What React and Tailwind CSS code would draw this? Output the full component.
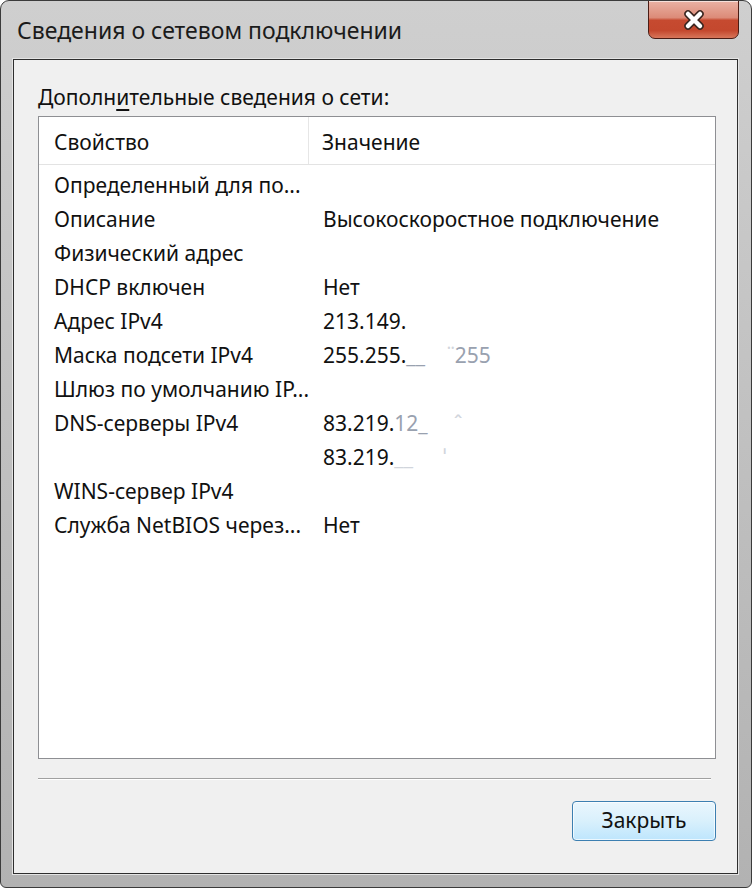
import React from "react";

const rows = [
  ["Определенный для по...", ""],
  ["Описание", "Высокоскоростное подключение"],
  ["Физический адрес", ""],
  ["DHCP включен", "Нет"],
  ["Адрес IPv4", "213.149."],
  ["Маска подсети IPv4", "mask"],
  ["Шлюз по умолчанию IP...", ""],
  ["DNS-серверы IPv4", "dns1"],
  ["", "dns2"],
  ["WINS-сервер IPv4", ""],
  ["Служба NetBIOS через...", "Нет"],
];

const Value = ({ v }) => {
  if (v === "mask")
    return (
      <span>
        255.255.<span className="text-gray-400">__</span>
        <span className="ml-[22px] text-gray-300">˙˙</span>
        <span className="text-gray-400">255</span>
      </span>
    );
  if (v === "dns1")
    return (
      <span>
        83.219.<span className="text-gray-400">12_</span>
        <span className="ml-[26px] text-gray-300">ˆ</span>
      </span>
    );
  if (v === "dns2")
    return (
      <span>
        83.219.<span className="text-gray-300">__</span>
        <span className="ml-[30px] text-gray-300">ˈ</span>
      </span>
    );
  return <span>{v}</span>;
};

const CloseIcon = () => (
  <svg width="26" height="22" viewBox="0 0 26 22">
    <path d="M7 5 L19 17 M19 5 L7 17" stroke="#3a2620" strokeWidth="7.5" strokeLinecap="round" />
    <path d="M7 5 L19 17 M19 5 L7 17" stroke="#ffffff" strokeWidth="4.5" strokeLinecap="round" />
  </svg>
);

export default function App() {
  return (
    <div
      className="w-[752px] h-[888px] flex flex-col border border-[#3b3b3b] rounded-t-[9px] rounded-b-[6px] bg-gradient-to-b from-[#cfcfcf] via-[#c0c0c0] to-[#b2b2b2] pl-[12px] pr-[13px] pb-[13px] overflow-hidden"
      style={{ fontFamily: '"Noto Sans", "Liberation Sans", sans-serif' }}
    >
      {/* title bar */}
      <div className="h-[58px] flex items-start justify-between">
        <div className="pl-[4px] pt-[13px] text-[23px] leading-[32px] text-[#1b1b1b]">
          Сведения о сетевом подключении
        </div>
        <div className="w-[91px] h-[39px] -mr-[1px] mt-[-1px] rounded-b-[7px] border border-[#4a1c14] bg-[linear-gradient(to_bottom,#eab2a4_0%,#dc8b78_45%,#c64a30_52%,#c4482e_80%,#d8765a_100%)] flex items-center justify-center shadow-[inset_0_1px_0_rgba(255,255,255,0.6)]">
          <CloseIcon />
        </div>
      </div>

      {/* content */}
      <div className="flex-1 flex flex-col border border-[#2e2e2e] bg-[#f0f0f0] shadow-[0_0_0_1px_#e4e4e4] pl-[24px] pr-[21px]">
        <div className="mt-[23px] h-[28px] leading-[28px] text-[21px] text-[#111]">
          Дополн<span className="underline underline-offset-4">и</span>тельные сведения о сети:
        </div>

        <div className="mt-[5px] h-[643px] border border-[#8e8f93] bg-white flex flex-col text-[21px] text-[#111]">
          <div className="h-[48px] flex border-b border-[#e3e3e3]">
            <div className="w-[270px] border-r border-[#e6e6e6] pl-[15px] flex items-center pt-[5px]">Свойство</div>
            <div className="pl-[13px] flex items-center pt-[5px]">Значение</div>
          </div>
          <div className="pt-[4px] flex flex-col">
            {rows.map(([k, v], i) => (
              <div key={i} className="h-[34px] flex items-center">
                <div className="w-[271px] pl-[15px] whitespace-nowrap overflow-hidden">{k}</div>
                <div className="pl-[13px] whitespace-nowrap">
                  <Value v={v} />
                </div>
              </div>
            ))}
          </div>
        </div>

        <div className="mt-[19px] mr-[5px] h-[2px] border-t border-[#a0a0a0] border-b border-b-white" />

        <div className="mt-[21px] flex justify-end">
          <button className="w-[144px] h-[40px] rounded-[4px] border border-[#3c7fb1] bg-gradient-to-b from-[#eaf6fd] via-[#d9f0fc] to-[#bee6fd] shadow-[inset_0_0_0_1px_rgba(255,255,255,0.7)] text-[21px] text-[#111]">
            Закрыть
          </button>
        </div>
      </div>
    </div>
  );
}
